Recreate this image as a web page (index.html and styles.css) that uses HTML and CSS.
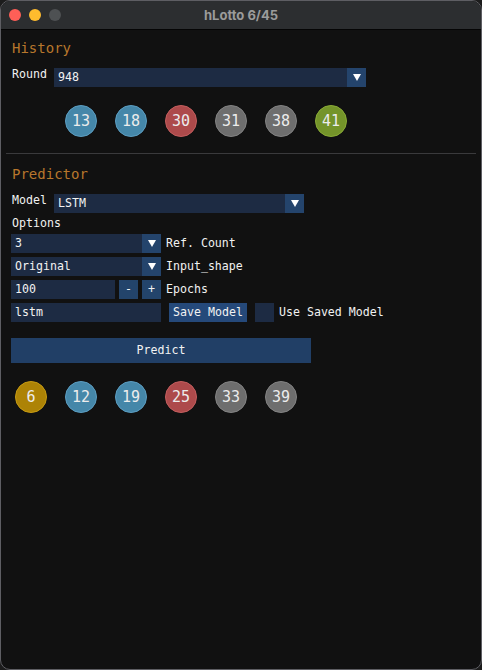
FILE: index.html
```html
<!DOCTYPE html>
<html lang="en">
<head>
  <meta charset="UTF-8">
  <meta name="viewport" content="width=device-width, initial-scale=1.0">
  <title>hLotto 6/45</title>
  <link rel="stylesheet" href="styles.css">
</head>
<body>
  <div class="window">
    <div class="titlebar">
      <div class="lights">
        <span class="light close"></span>
        <span class="light minimize"></span>
        <span class="light zoom"></span>
      </div>
      <div class="title">hLotto 6/45</div>
    </div>

    <div class="content">
      <!-- History section -->
      <h2 class="header">History</h2>
      <div class="row">
        <span class="label top">Round</span>
        <div class="combo round-combo">
          <span class="combo-value">948</span>
          <span class="combo-arrow"><i></i></span>
        </div>
      </div>
      <div class="balls history-balls">
        <span class="ball blue">13</span>
        <span class="ball blue">18</span>
        <span class="ball red">30</span>
        <span class="ball gray">31</span>
        <span class="ball gray">38</span>
        <span class="ball green">41</span>
      </div>

      <div class="separator"></div>

      <!-- Predictor section -->
      <h2 class="header">Predictor</h2>
      <div class="row">
        <span class="label top">Model</span>
        <div class="combo model-combo">
          <span class="combo-value">LSTM</span>
          <span class="combo-arrow"><i></i></span>
        </div>
      </div>
      <div class="text-line">Options</div>

      <div class="row">
        <div class="combo small-combo">
          <span class="combo-value">3</span>
          <span class="combo-arrow"><i></i></span>
        </div>
        <span class="label">Ref. Count</span>
      </div>
      <div class="row">
        <div class="combo small-combo">
          <span class="combo-value">Original</span>
          <span class="combo-arrow"><i></i></span>
        </div>
        <span class="label">Input_shape</span>
      </div>
      <div class="row">
        <div class="input epochs-input">100</div>
        <button class="btn square">-</button>
        <button class="btn square">+</button>
        <span class="label">Epochs</span>
      </div>
      <div class="row">
        <div class="input name-input">lstm</div>
        <button class="btn save-btn">Save Model</button>
        <span class="checkbox"></span>
        <span class="label">Use Saved Model</span>
      </div>

      <button class="btn predict-btn">Predict</button>

      <div class="balls predict-balls">
        <span class="ball yellow">6</span>
        <span class="ball blue">12</span>
        <span class="ball blue">19</span>
        <span class="ball red">25</span>
        <span class="ball gray">33</span>
        <span class="ball gray">39</span>
      </div>
    </div>
  </div>
</body>
</html>
```

FILE: styles.css
```css
html, body {
  margin: 0;
  padding: 0;
  background-color: #1c1c1c;
}

.window {
  width: 482px;
  height: 670px;
  box-sizing: border-box;
  border: 1px solid #5e5e63;
  border-radius: 10px;
  overflow: hidden;
  background-color: #111111;
  display: flex;
  flex-direction: column;
}

.titlebar {
  height: 28px;
  flex: none;
  background-color: #2c2e30;
  border-bottom: 1px solid #050505;
  display: flex;
  align-items: center;
  position: relative;
}

.lights {
  display: flex;
  gap: 8px;
  padding-left: 8px;
}

.light {
  width: 12px;
  height: 12px;
  border-radius: 50%;
}

.light.close { background-color: #fe5f57; }
.light.minimize { background-color: #febc2e; }
.light.zoom { background-color: #4e5153; }

.title {
  position: absolute;
  left: 0;
  right: 0;
  top: 0;
  line-height: 28px;
  text-align: center;
  font-family: Inter, "Liberation Sans", sans-serif;
  font-weight: 700;
  font-size: 13px;
  color: #9b9b9b;
}

.content {
  flex: 1;
  padding: 10px 10px 0 10px;
  font-family: "DejaVu Sans Mono", "Liberation Mono", monospace;
  font-size: 11.6px;
  color: #f2f2f2;
}

.header {
  margin: 0 0 12px 0;
  font-size: 14px;
  font-weight: normal;
  line-height: 16px;
  color: #b8772c;
  padding-left: 1px;
}

.row {
  display: flex;
  align-items: flex-start;
  height: 19px;
  margin-bottom: 4px;
}

.label {
  line-height: 19px;
  margin-left: 5px;
  white-space: pre;
}

.label.top {
  line-height: 13px;
  margin-left: 1px;
  width: 42px;
}

.text-line {
  line-height: 13px;
  margin: 4px 0 4px 1px;
}

.combo {
  display: flex;
  height: 19px;
  background-color: #1d2b43;
}

.combo-value {
  flex: 1;
  line-height: 19px;
  padding-left: 4px;
}

.combo-arrow {
  width: 19px;
  height: 19px;
  background-color: #24446c;
  display: flex;
  align-items: center;
  justify-content: center;
}

.combo-arrow i {
  width: 0;
  height: 0;
  border-left: 4px solid transparent;
  border-right: 4px solid transparent;
  border-top: 7px solid #ffffff;
}

.round-combo { width: 312px; }
.model-combo { width: 250px; }
.small-combo { width: 150px; }

.input {
  height: 19px;
  line-height: 19px;
  padding-left: 4px;
  box-sizing: border-box;
  background-color: #1d2b43;
}

.epochs-input { width: 104px; }
.name-input { width: 150px; }

.btn {
  font-family: inherit;
  font-size: inherit;
  color: #f2f2f2;
  border: none;
  margin: 0;
  padding: 0;
  background-color: #23446b;
  height: 19px;
  line-height: 19px;
}

.btn.square {
  width: 19px;
  margin-left: 4px;
}

.save-btn {
  width: 78px;
  margin-left: 8px;
  background-color: #25497a;
}

.checkbox {
  width: 19px;
  height: 19px;
  margin-left: 8px;
  background-color: #1d2b43;
}

.predict-btn {
  display: block;
  width: 300px;
  height: 25px;
  line-height: 25px;
  margin-top: 16px;
  background-color: #213f66;
}

.balls {
  display: flex;
  gap: 18px;
  margin-top: 18px;
}

.history-balls {
  margin-left: 54px;
}

.predict-balls {
  margin-left: 4px;
}

.ball {
  width: 32px;
  height: 32px;
  box-sizing: border-box;
  border-radius: 50%;
  border: 1px solid;
  display: flex;
  align-items: center;
  justify-content: center;
  font-size: 15px;
  color: #ececec;
}

.ball.blue { background-color: #4587a9; border-color: #5c9ec2; }
.ball.red { background-color: #ad4a4b; border-color: #c45e5e; }
.ball.gray { background-color: #6e6e6e; border-color: #838383; }
.ball.green { background-color: #74942a; border-color: #8aab36; }
.ball.yellow { background-color: #ad8306; border-color: #c79b12; }

.separator {
  height: 1px;
  background-color: #3a3a3c;
  margin: 16px -5px 12px -5px;
}
```
